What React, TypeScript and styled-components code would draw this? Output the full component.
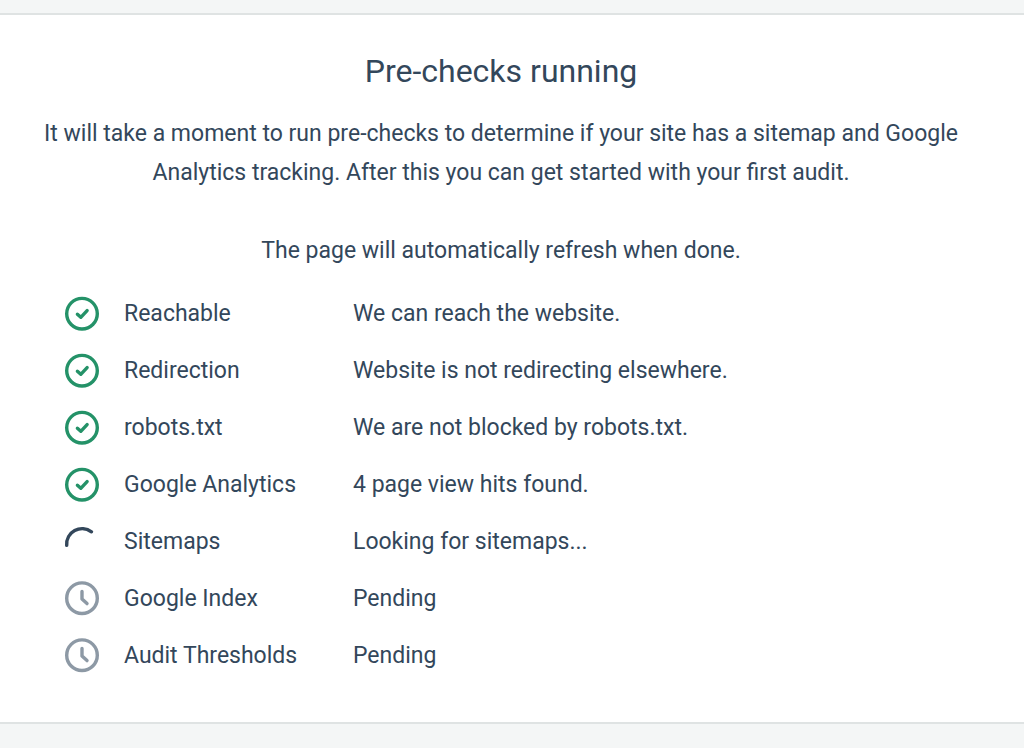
import React from "react";
import styled, { createGlobalStyle } from "styled-components";

const GlobalStyle = createGlobalStyle`
  * { box-sizing: border-box; }
  body { margin: 0; background: #f4f6f6; color: #33475b; font: 23px/39px Roboto, sans-serif; }
`;
const Page = styled.main`padding: 13px 0 24px;`;
const Card = styled.section`
  background: #fff;
  border: solid #dfe3e3;
  border-width: 2px 0;
  padding: 36px 40px 38px 18px;
`;
const Title = styled.h1`margin: 0 0 23px; font-size: 32px; line-height: 40px; font-weight: 400; text-align: center;`;
const Intro = styled.p`max-width: 920px; margin: 0 auto 39px; text-align: center;`;
const Note = styled(Intro)`margin-bottom: 15px;`;
const Table = styled.table`border-collapse: collapse; margin-left: 46px;`;
const Row = styled.tr`height: 57px;`;
const IconCell = styled.td`width: 60px; padding: 0; line-height: 0; vertical-align: middle;`;
const Name = styled.th`width: 229px; padding: 0; font-weight: 400; text-align: left;`;
const Result = styled.td`padding: 0;`;
const Icon = styled.svg`
  display: block;
  width: 36px;
  height: 36px;
  fill: none;
  stroke-width: 3.4;
  stroke-linecap: round;
  stroke-linejoin: round;
`;

type Status = "done" | "running" | "pending";

function StatusIcon({ status }: { status: Status }) {
  if (status === "done")
    return (
      <Icon viewBox="0 0 36 36" stroke="#249268" role="img" aria-label="Passed">
        <circle cx="18" cy="17.7" r="15.3" />
        <path d="M13.4 18.2l3.4 3.1 6.3-6.7" />
      </Icon>
    );
  if (status === "running")
    return (
      <Icon viewBox="0 0 36 36" stroke="#33475b" role="img" aria-label="Running">
        <path d="M2.7 21.4A15.5 15.5 0 0 1 27.5 7.8" />
      </Icon>
    );
  return (
    <Icon viewBox="0 0 36 36" stroke="#8d99a5" role="img" aria-label="Pending">
      <circle cx="18" cy="17.2" r="15.3" />
      <path d="M18 10.4v7.5l5 4.7" />
    </Icon>
  );
}

const checks: { status: Status; name: string; result: string }[] = [
  { status: "done", name: "Reachable", result: "We can reach the website." },
  { status: "done", name: "Redirection", result: "Website is not redirecting elsewhere." },
  { status: "done", name: "robots.txt", result: "We are not blocked by robots.txt." },
  { status: "done", name: "Google Analytics", result: "4 page view hits found." },
  { status: "running", name: "Sitemaps", result: "Looking for sitemaps..." },
  { status: "pending", name: "Google Index", result: "Pending" },
  { status: "pending", name: "Audit Thresholds", result: "Pending" },
];

export default function App() {
  return (
    <Page>
      <GlobalStyle />
      <Card>
        <Title>Pre-checks running</Title>
        <Intro>
          It will take a moment to run pre-checks to determine if your site has a sitemap and Google
          Analytics tracking. After this you can get started with your first audit.
        </Intro>
        <Note>The page will automatically refresh when done.</Note>
        <Table>
          <tbody>
            {checks.map((c) => (
              <Row key={c.name}>
                <IconCell><StatusIcon status={c.status} /></IconCell>
                <Name scope="row">{c.name}</Name>
                <Result>{c.result}</Result>
              </Row>
            ))}
          </tbody>
        </Table>
      </Card>
    </Page>
  );
}
